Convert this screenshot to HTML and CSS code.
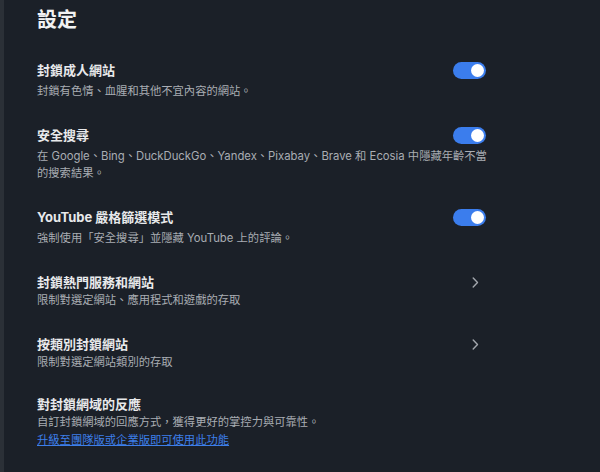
FILE: index.html
```html
<!DOCTYPE html>
<html lang="zh-Hant">
<head>
<meta charset="utf-8">
<title>設定</title>
<link rel="stylesheet" href="styles.css">
</head>
<body>
<div class="frame">
  <main class="content">
    <h1 class="page-title">設定</h1>
    <div class="list">
      <section class="item">
        <div class="item-head">
          <span class="item-title">封鎖成人網站</span>
          <span class="toggle"><span class="knob"></span></span>
        </div>
        <p class="desc desc-gap">封鎖有色情、血腥和其他不宜內容的網站。</p>
      </section>
      <section class="item">
        <div class="item-head">
          <span class="item-title">安全搜尋</span>
          <span class="toggle"><span class="knob"></span></span>
        </div>
        <p class="desc desc-gap desc-wide">在 Google、Bing、DuckDuckGo、Yandex、Pixabay、Brave 和 Ecosia 中隱藏年齡不當的搜索結果。</p>
      </section>
      <section class="item">
        <div class="item-head">
          <span class="item-title">YouTube 嚴格篩選模式</span>
          <span class="toggle"><span class="knob"></span></span>
        </div>
        <p class="desc desc-gap">強制使用「安全搜尋」並隱藏 YouTube 上的評論。</p>
      </section>
      <section class="item">
        <div class="item-head">
          <span class="item-title">封鎖熱門服務和網站</span>
          <svg class="chevron" width="7" height="11" viewBox="0 0 7 11"><polyline points="1.2,1 5.5,5.5 1.2,10" fill="none" stroke="#a3a7ad" stroke-width="1.4" stroke-linecap="round" stroke-linejoin="round"/></svg>
        </div>
        <p class="desc">限制對選定網站、應用程式和遊戲的存取</p>
      </section>
      <section class="item">
        <div class="item-head">
          <span class="item-title">按類別封鎖網站</span>
          <svg class="chevron" width="7" height="11" viewBox="0 0 7 11"><polyline points="1.2,1 5.5,5.5 1.2,10" fill="none" stroke="#a3a7ad" stroke-width="1.4" stroke-linecap="round" stroke-linejoin="round"/></svg>
        </div>
        <p class="desc">限制對選定網站類別的存取</p>
      </section>
      <section class="item item-last">
        <div class="item-head">
          <span class="item-title">對封鎖網域的反應</span>
        </div>
        <p class="desc">自訂封鎖網域的回應方式，獲得更好的掌控力與可靠性。</p>
        <a class="upgrade" href="#">升級至團隊版或企業版即可使用此功能</a>
      </section>
    </div>
  </main>
</div>
</body>
</html>
```

FILE: styles.css
```css
html, body {
  margin: 0;
  padding: 0;
  background: #1b2028;
}
body {
  font-family: "Inter", "Noto Sans CJK TC", sans-serif;
  color: #e6e7e9;
  width: 600px;
  height: 472px;
  overflow: hidden;
}
.frame {
  border-left: 4px solid #2b3037;
  height: 472px;
  box-sizing: border-box;
}
.content {
  padding: 8px 114px 0 33px;
}
.page-title {
  margin: 0 0 28.5px 0;
  font-size: 20px;
  line-height: 24px;
  font-weight: 700;
  color: #f1f2f3;
}
.list {
  display: flex;
  flex-direction: column;
  gap: 26px;
}
.item-head {
  display: flex;
  align-items: center;
  justify-content: space-between;
  height: 19px;
}
.item-title {
  font-size: 13px;
  line-height: 19px;
  font-weight: 700;
  color: #e8e9eb;
}
.desc {
  margin: 0;
  font-size: 11.3px;
  line-height: 17px;
  color: #a9adb3;
}
.desc-gap {
  margin-top: 3px;
}
.desc-wide {
  margin-right: -7px;
}
.toggle {
  width: 33px;
  height: 17px;
  border-radius: 9px;
  background: #3b7ded;
  display: flex;
  align-items: center;
  justify-content: flex-end;
  padding-right: 2px;
  box-sizing: border-box;
}
.knob {
  width: 13px;
  height: 13px;
  border-radius: 50%;
  background: #ffffff;
}
.chevron {
  margin-right: 7px;
}
.item-last {
  margin-top: -2px;
}
.upgrade {
  display: block;
  font-size: 11.3px;
  line-height: 17px;
  margin-top: 1px;
  color: #3d7fea;
  text-decoration: underline;
}
```
